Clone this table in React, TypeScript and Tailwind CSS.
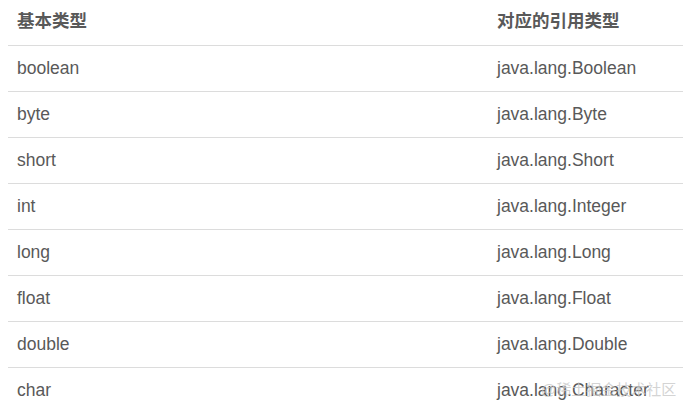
const rows: [string, string][] = [
  ["boolean", "java.lang.Boolean"],
  ["byte", "java.lang.Byte"],
  ["short", "java.lang.Short"],
  ["int", "java.lang.Integer"],
  ["long", "java.lang.Long"],
  ["float", "java.lang.Float"],
  ["double", "java.lang.Double"],
  ["char", "java.lang.Character"],
];

export default function App() {
  return (
    <div className="relative w-[683px] h-[409px] overflow-hidden bg-white pl-2 text-[17.5px] text-[#595959] font-['Liberation_Sans','Noto_Sans_CJK_SC',sans-serif]">
      <div className="flex h-[46px] items-center pb-[2px] border-b border-[#dcdcdc] font-bold">
        <div className="w-[480px] pl-[9px]">基本类型</div>
        <div className="pl-[9px]">对应的引用类型</div>
      </div>
      {rows.map(([base, ref]) => (
        <div key={base} className="flex h-[46px] items-center border-b border-[#dcdcdc]">
          <div className="w-[480px] pl-[9px]">{base}</div>
          <div className="pl-[9px]">{ref}</div>
        </div>
      ))}
      {/* watermark */}
      <div className="absolute left-[541px] top-[379px] text-[15px] text-[#c8c8c8]/80">@稀土掘金技术社区</div>
    </div>
  );
}
